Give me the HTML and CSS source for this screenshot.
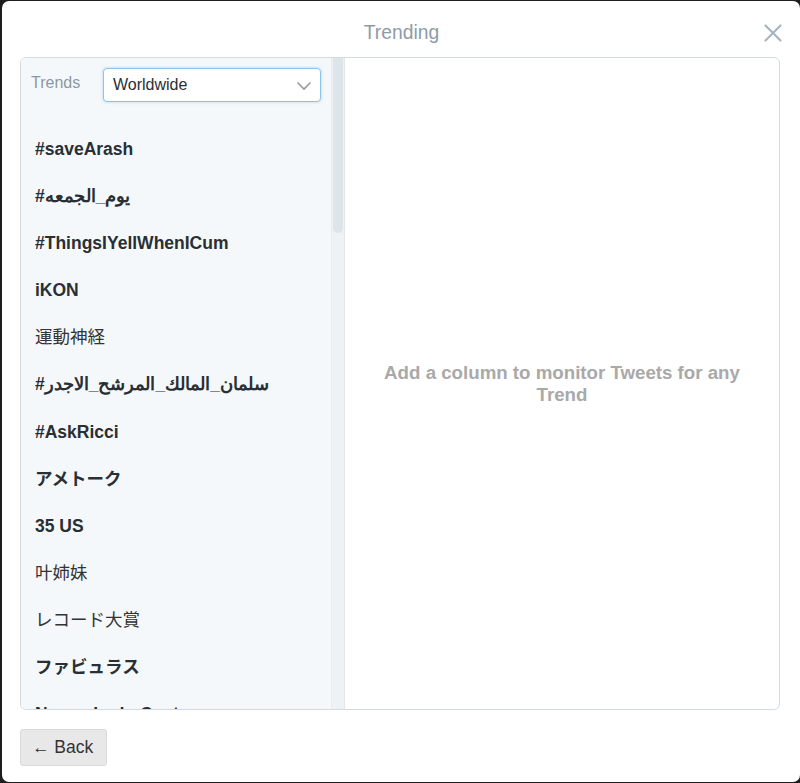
FILE: index.html
```html
<!DOCTYPE html>
<html lang="en">
<head>
<meta charset="utf-8">
<title>Trending</title>
<link rel="stylesheet" href="styles.css">
</head>
<body>
<div class="modal">
  <header class="modal-header">
    <span></span>
    <h1 class="modal-title">Trending</h1>
    <button class="close" aria-label="Close">
      <svg width="18" height="18" viewBox="0 0 18 18"><path d="M1.5 1.5 L16.5 16.5 M16.5 1.5 L1.5 16.5" stroke="#a9b5bf" stroke-width="2.2" stroke-linecap="round" fill="none"/></svg>
    </button>
  </header>
  <div class="panel">
    <div class="sidebar">
      <div class="sidebar-main">
        <div class="controls">
          <span class="controls-label">Trends</span>
          <div class="select">
            <span>Worldwide</span>
            <svg width="16" height="10" viewBox="0 0 16 10"><path d="M1.5 1.5 L8 8 L14.5 1.5" stroke="#9a9a9a" stroke-width="1.6" fill="none"/></svg>
          </div>
        </div>
        <ul class="trends">
          <li class="trend">#saveArash</li>
          <li class="trend">#يوم_الجمعه</li>
          <li class="trend">#ThingsIYellWhenICum</li>
          <li class="trend">iKON</li>
          <li class="trend light">運動神経</li>
          <li class="trend">#سلمان_المالك_المرشح_الاجدر</li>
          <li class="trend">#AskRicci</li>
          <li class="trend">アメトーク</li>
          <li class="trend">35 US</li>
          <li class="trend light">叶姉妹</li>
          <li class="trend light">レコード大賞</li>
          <li class="trend">ファビュラス</li>
          <li class="trend">Nosso Lado Canta</li>
        </ul>
      </div>
      <div class="scrollbar"><div class="thumb"></div></div>
    </div>
    <div class="detail">
      <p class="empty">Add a column to monitor Tweets for any Trend</p>
    </div>
  </div>
  <footer class="modal-footer">
    <button class="back">← Back</button>
  </footer>
</div>
</body>
</html>
```

FILE: styles.css
```css
html, body {
  margin: 0;
  padding: 0;
}
body {
  background: #1e1e1e;
  font-family: "Liberation Sans", Arial, "Noto Sans CJK JP", sans-serif;
  height: 783px;
  overflow: hidden;
}
.modal {
  margin: 1px 0 0 2px;
  width: 798px;
  height: 781px;
  box-sizing: border-box;
  background: #fff;
  border-radius: 7px;
  padding: 0 20px 16px 18px;
  display: flex;
  flex-direction: column;
}
.modal-header {
  height: 56px;
  display: grid;
  grid-template-columns: 1fr auto 1fr;
  align-items: center;
  margin-right: -2px;
}
.modal-title {
  margin: 0;
  font-size: 19.3px;
  font-weight: normal;
  color: #8e9ba7;
  padding-top: 7px;
  padding-left: 1px;
}
.close {
  justify-self: end;
  border: 0;
  background: none;
  padding: 0;
  width: 18px;
  height: 18px;
  margin-top: 7px;
  margin-right: 0;
  display: flex;
}
.panel {
  flex: 1;
  display: flex;
  border: 1px solid #d3dae0;
  border-radius: 6px;
  overflow: hidden;
  min-height: 0;
}
.sidebar {
  display: flex;
  width: 324px;
  flex: none;
}
.sidebar-main {
  width: 310px;
  background: #f5f8fa;
  overflow: hidden;
}
.controls {
  display: flex;
  align-items: center;
  padding: 10px 10px 0 10px;
  gap: 23px;
}
.controls-label {
  font-size: 16px;
  color: #8a98a5;
  margin-top: -4px;
  width: 49px;
}
.select {
  flex: 1;
  height: 34px;
  box-sizing: border-box;
  border: 1px solid #8ec3ec;
  border-radius: 4px;
  background: #fff;
  box-shadow: 0 0 3px rgba(102, 175, 233, 0.55);
  display: flex;
  align-items: center;
  justify-content: space-between;
  padding: 0 8px 0 9px;
  font-size: 16px;
  color: #292f33;
}
.select svg {
  margin-top: 1px;
}
.trends {
  list-style: none;
  margin: 0;
  padding: 24px 0 0 14px;
}
.trend {
  height: 47.1px;
  line-height: 47.1px;
  font-size: 17.5px;
  font-weight: bold;
  color: #292f33;
  white-space: nowrap;
}
.trend.light {
  font-weight: normal;
  color: #333;
}
.scrollbar {
  width: 14px;
  background: #eef2f5;
  border-left: 1px solid #e6ebef;
  border-right: 1px solid #e3e8ec;
  box-sizing: border-box;
  padding: 0 1px 0 1px;
}
.thumb {
  height: 175px;
  background: #dde4ea;
  border-radius: 0 0 6px 6px;
}
.detail {
  flex: 1;
  display: flex;
  align-items: center;
  justify-content: center;
  padding: 0 30px;
}
.empty {
  margin: 0;
  text-align: center;
  font-size: 18.7px;
  line-height: 22px;
  font-weight: bold;
  color: #a9a9a9;
}
.modal-footer {
  padding-top: 19px;
}
.back {
  height: 37px;
  width: 87px;
  box-sizing: border-box;
  border: 1px solid #dadada;
  border-radius: 3px;
  background: #e8e8e8;
  font-family: "Liberation Sans", Arial, sans-serif;
  font-size: 17.5px;
  color: #333;
  padding: 0 0 0 11px;
  text-align: left;
}
```
